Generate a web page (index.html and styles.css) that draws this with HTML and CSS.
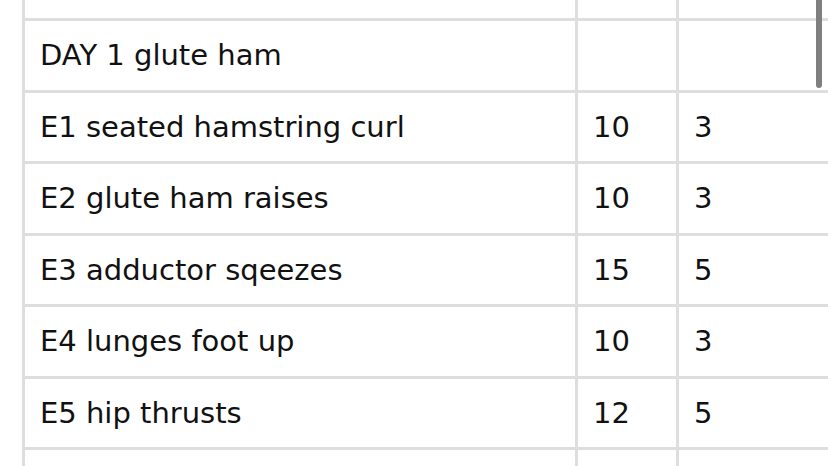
FILE: index.html
```html
<!DOCTYPE html>
<html>
<head>
<meta charset="utf-8">
<link rel="stylesheet" href="styles.css">
</head>
<body>
<div class="viewport">
  <table class="plan">
    <colgroup>
      <col class="c-name">
      <col class="c-reps">
      <col class="c-sets">
    </colgroup>
    <tr class="head"><td>Day</td><td>Reps</td><td>Sets (kg)</td></tr>
    <tr><td>DAY 1 glute ham</td><td></td><td></td></tr>
    <tr><td>E1 seated hamstring curl</td><td>10</td><td>3</td></tr>
    <tr><td>E2 glute ham raises</td><td>10</td><td>3</td></tr>
    <tr><td>E3 adductor sqeezes</td><td>15</td><td>5</td></tr>
    <tr><td>E4 lunges foot up</td><td>10</td><td>3</td></tr>
    <tr><td>E5 hip thrusts</td><td>12</td><td>5</td></tr>
    <tr><td>&nbsp;</td><td></td><td></td></tr>
  </table>
  <div class="scrollbar"></div>
</div>
</body>
</html>
```

FILE: styles.css
```css
html, body {
  margin: 0;
  padding: 0;
  background: #ffffff;
  overflow: hidden;
}

.viewport {
  position: relative;
  width: 828px;
  height: 466px;
  overflow: hidden;
  padding-left: 22px;
  box-sizing: border-box;
}

.plan {
  border-collapse: collapse;
  table-layout: fixed;
  width: 900px;
  margin-top: -54px;
  font-family: "DejaVu Sans", Verdana, sans-serif;
  font-size: 29px;
  color: #111111;
}

.c-name { width: 553px; }
.c-reps { width: 101px; }
.c-sets { width: 246px; }

.plan td {
  border: 3px solid #dedede;
  height: 71.5px;
  padding: 0 0 0 15px;
  vertical-align: middle;
  white-space: nowrap;
  box-sizing: border-box;
}

.plan tr.head td {
  height: 72px;
  vertical-align: bottom;
  padding-bottom: 19px;
}

.scrollbar {
  position: absolute;
  top: -10px;
  right: 6px;
  width: 6px;
  height: 98px;
  border-radius: 3px;
  background: #7f7f7f;
}
```
